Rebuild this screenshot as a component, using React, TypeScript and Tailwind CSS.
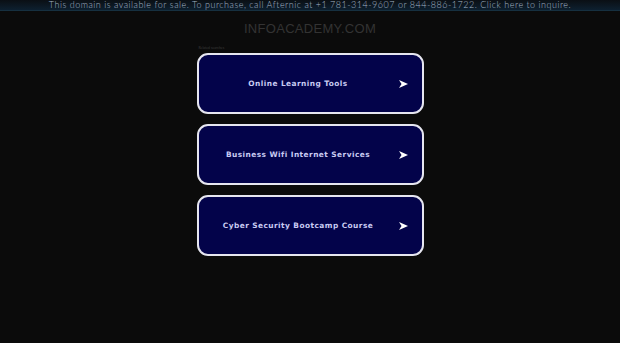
import { ReactNode } from 'react';

const links = ['Online Learning Tools', 'Business Wifi Internet Services', 'Cyber Security Bootcamp Course'];

function Arrow() {
    return (
        <svg width="9" height="8" viewBox="0 0 9 8" className="block">
            <path d="M0 0 L9 4 L0 8 L2.5 4 Z" fill="#ffffff" />
        </svg>
    );
}

function LinkBox({ children }: { children: ReactNode }) {
    return (
        <a className="relative flex items-center justify-center h-[61px] w-[227px] rounded-[11px] border-2 border-[#e6e6f0] bg-[#03034a] cursor-pointer">
            <span className="text-[7.4px] font-bold tracking-[0.45px] text-[#c9cbf2] pr-[24px] font-['DejaVu_Sans',sans-serif]">
                {children}
            </span>
            <span className="absolute right-[14px] top-1/2 -translate-y-1/2">
                <Arrow />
            </span>
        </a>
    );
}

export default function App() {
    return (
        <div className="min-h-[343px] w-full bg-[#0b0b0b] font-['Lato',sans-serif]">
            {/* sale banner */}
            <div className="h-[11px] bg-gradient-to-b from-[#0a0f14] to-[#0d2030] border-b border-[#163040] flex items-center justify-center overflow-hidden">
                <p className="text-[9px] leading-[10px] tracking-[0.5px] font-light text-[#a3b4c6] whitespace-nowrap">
                    This domain is available for sale. To purchase, call Afternic at +1 781-314-9607 or 844-886-1722. Click here to inquire.
                </p>
            </div>

            <h1 className="mt-[9px] text-center text-[13px] leading-[18px] text-[#333333] tracking-[0.3px] font-['Liberation_Sans',sans-serif]">
                INFOACADEMY.COM
            </h1>

            <div className="mx-auto w-[227px] mt-[8px]">
                <p className="text-[3.5px] leading-[5px] text-[#3a3a3a] pl-[2px]">Related searches</p>
                <div className="mt-[2px] flex flex-col gap-[10px]">
                    {links.map((l) => (
                        <LinkBox key={l}>{l}</LinkBox>
                    ))}
                </div>
            </div>
        </div>
    );
}
